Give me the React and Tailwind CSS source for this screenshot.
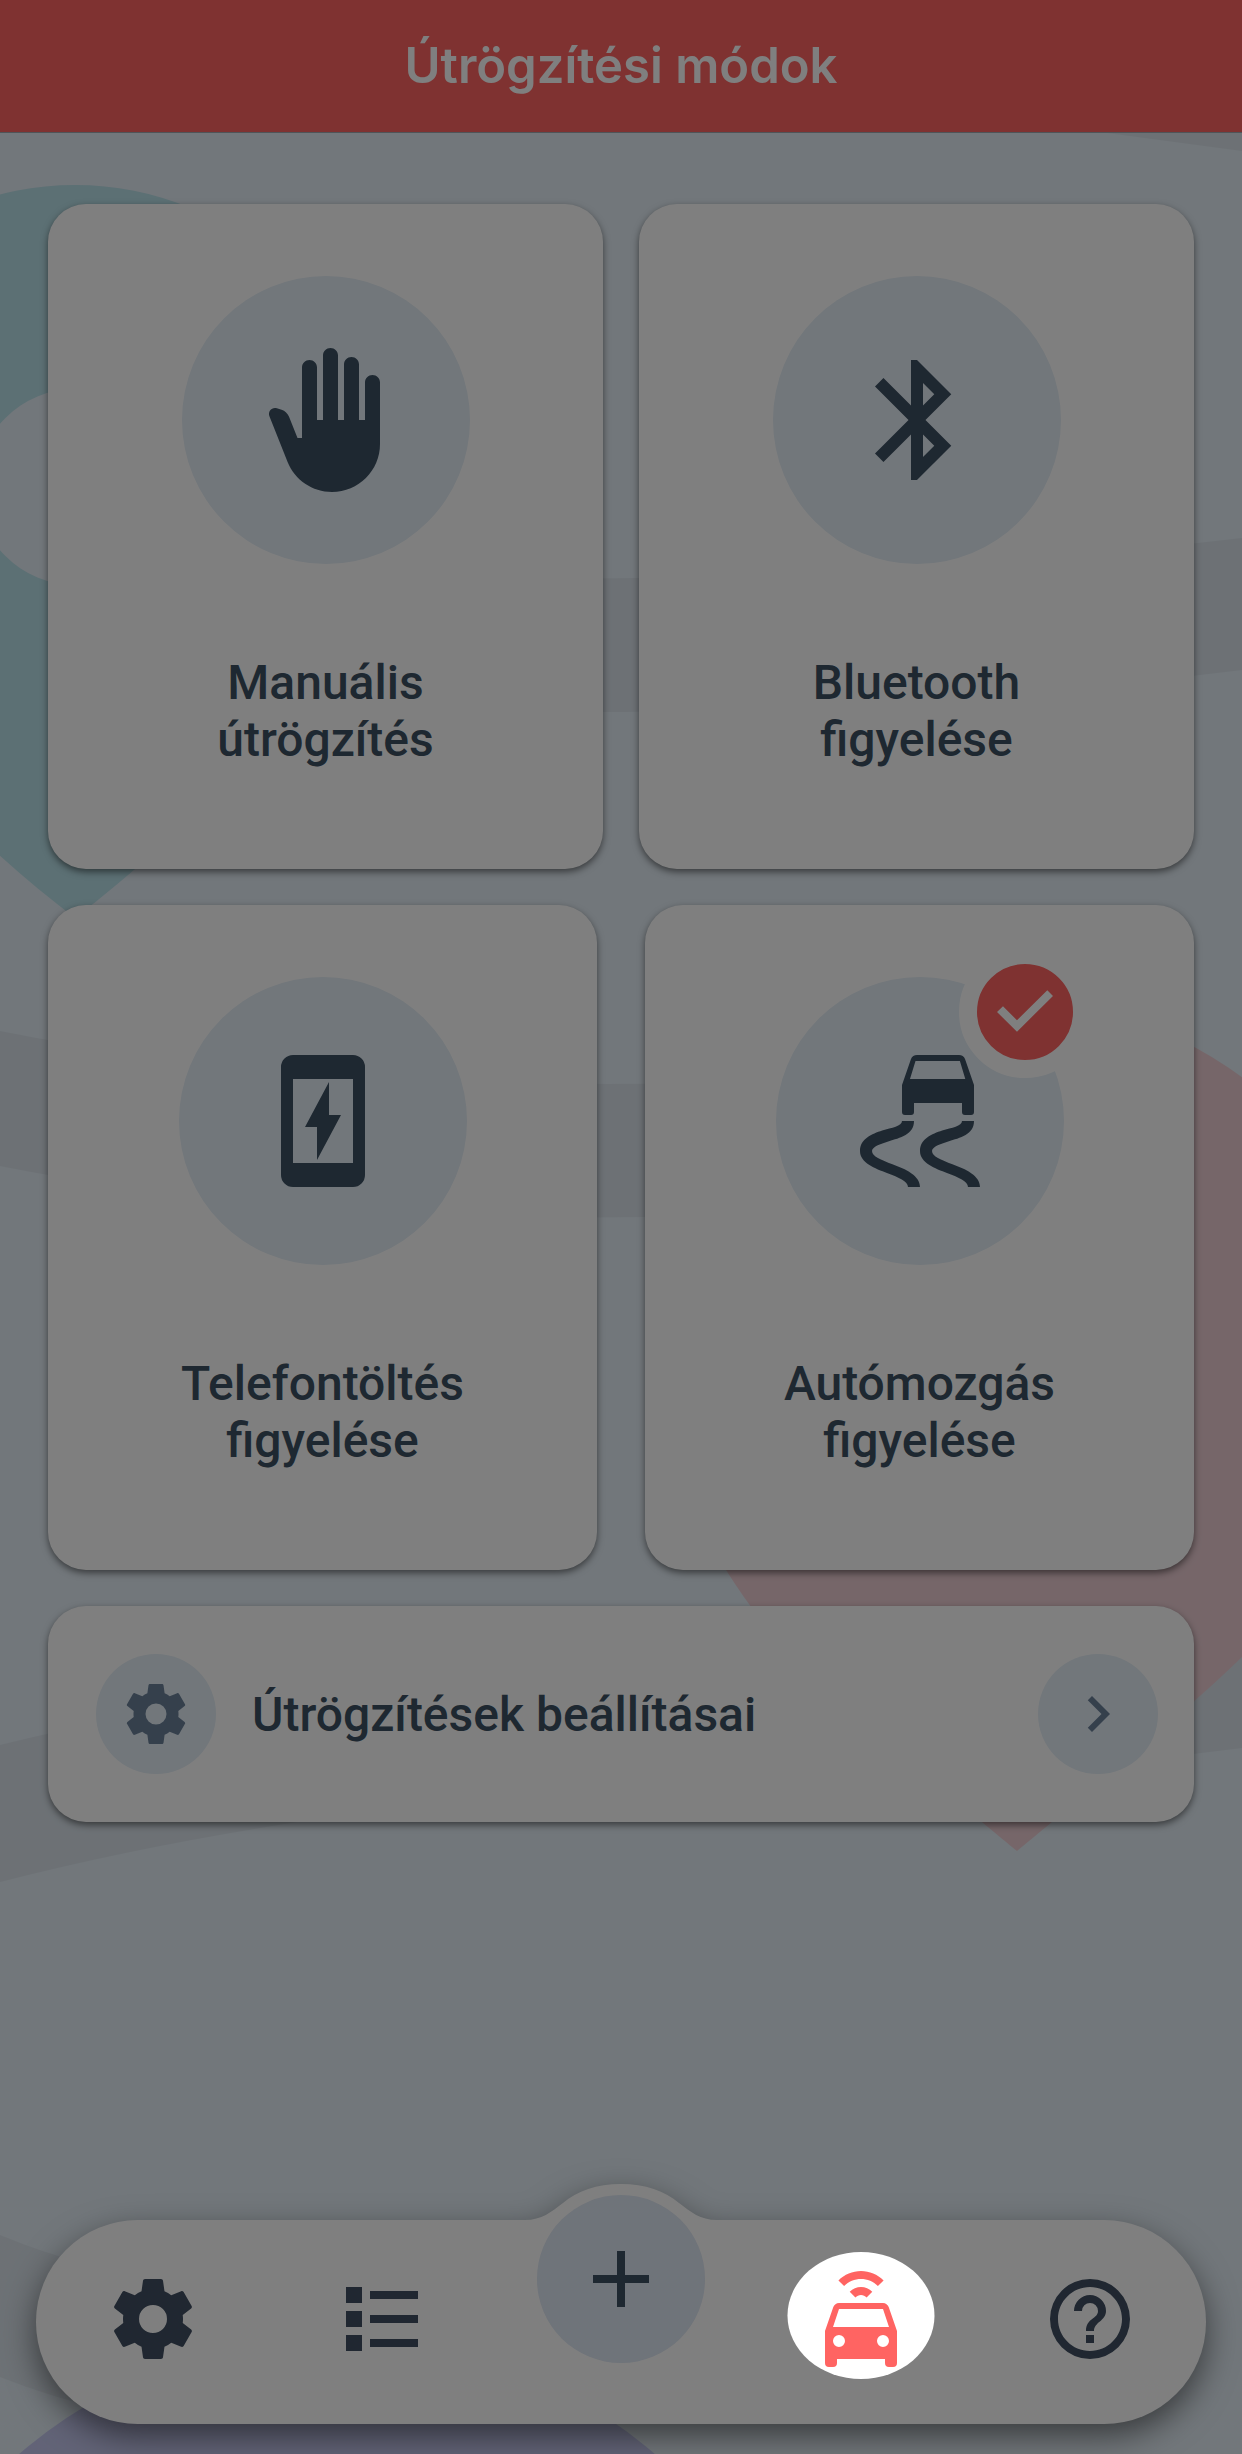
import React, { useState } from 'react';

const icons = {
  hand: 'M13 24C9.74 24 6.81 22 5.6 19L2.57 11.37C2.26 10.58 3 9.79 3.81 10.05L4.6 10.31C5.16 10.5 5.62 10.92 5.84 11.47L7.25 15H8V3.25C8 2.56 8.56 2 9.25 2S10.5 2.56 10.5 3.25V12H11.5V1.25C11.5 .56 12.06 0 12.75 0S14 .56 14 1.25V12H15V2.75C15 2.06 15.56 1.5 16.25 1.5C16.94 1.5 17.5 2.06 17.5 2.75V12H18.5V5.75C18.5 5.06 19.06 4.5 19.75 4.5S21 5.06 21 5.75V16C21 20.42 17.42 24 13 24Z',
  bluetooth:
    'M14.88,16.29L13,18.17V14.41M13,5.83L14.88,7.71L13,9.58M17.71,7.71L12,2H11V9.58L6.41,5L5,6.41L10.59,12L5,17.58L6.41,19L11,14.41V22H12L17.71,16.29L13.41,12L17.71,7.71Z',
  phone:
    'M17 1H7a2 2 0 0 0-2 2v18a2 2 0 0 0 2 2h10a2 2 0 0 0 2-2V3a2 2 0 0 0-2-2zM17 19H7V5h10zM9 13h2v5.5L15 11h-2V5.5z',
  skid: 'M19.5 1.66C19.35 1.26 18.96 1 18.5 1h-7c-.46 0-.85.26-1 .66L9 6v4.5a.5.5 0 0 0 .5.5h1a.5.5 0 0 0 .5-.5V9h8v1.5a.5.5 0 0 0 .5.5h1a.5.5 0 0 0 .5-.5V6zM10.33 5l.92-3h7.4l.9 3zM11 12C11 14.3 8.7 14.8 6.7 15.4C5.4 15.8 4 16.3 4 17C4 17.9 5.5 18.5 7.4 19.2C9.6 20 12 21.1 12 23H10C10 22 8.4 21.4 6.6 20.7C4.5 19.9 2 19 2 17C2 15 4 14.15 5.7 13.6C7.3 13.1 9 12.9 9 12ZM21 12C21 14.3 18.7 14.8 16.7 15.4C15.4 15.8 14 16.3 14 17C14 17.9 15.5 18.5 17.4 19.2C19.6 20 22 21.1 22 23H20C20 22 18.4 21.4 16.6 20.7C14.5 19.9 12 19 12 17C12 15 14 14.15 15.7 13.6C17.3 13.1 19 12.9 19 12Z',
  cog: 'M12,15.5A3.5,3.5 0 0,1 8.5,12A3.5,3.5 0 0,1 12,8.5A3.5,3.5 0 0,1 15.5,12A3.5,3.5 0 0,1 12,15.5M19.43,12.97C19.47,12.65 19.5,12.33 19.5,12C19.5,11.67 19.47,11.34 19.43,11L21.54,9.37C21.73,9.22 21.78,8.95 21.66,8.73L19.66,5.27C19.54,5.05 19.27,4.96 19.05,5.05L16.56,6.05C16.04,5.66 15.5,5.32 14.87,5.07L14.5,2.42C14.46,2.18 14.25,2 14,2H10C9.75,2 9.54,2.18 9.5,2.42L9.13,5.07C8.5,5.32 7.96,5.66 7.44,6.05L4.95,5.05C4.73,4.96 4.46,5.05 4.34,5.27L2.34,8.73C2.21,8.95 2.27,9.22 2.46,9.37L4.57,11C4.53,11.34 4.5,11.67 4.5,12C4.5,12.33 4.53,12.65 4.57,12.97L2.46,14.63C2.27,14.78 2.21,15.05 2.34,15.27L4.34,18.73C4.46,18.95 4.73,19.03 4.95,18.95L7.44,17.94C7.96,18.34 8.5,18.68 9.13,18.93L9.5,21.58C9.54,21.82 9.75,22 10,22H14C14.25,22 14.46,21.82 14.5,21.58L14.87,18.93C15.5,18.67 16.04,18.34 16.56,17.94L19.05,18.95C19.27,19.03 19.54,18.95 19.66,18.73L21.66,15.27C21.78,15.05 21.73,14.78 21.54,14.63L19.43,12.97Z',
  list: 'M3,4H7V8H3V4M9,5V7H21V5H9M3,10H7V14H3V10M9,11V13H21V11H9M3,16H7V20H3V16M9,17V19H21V17H9',
  plus: 'M19,13H13V19H11V13H5V11H11V5H13V11H19V13Z',
  car: 'M5,14H19L17.5,9.5H6.5L5,14M17.5,19A1.5,1.5 0 0,0 19,17.5A1.5,1.5 0 0,0 17.5,16A1.5,1.5 0 0,0 16,17.5A1.5,1.5 0 0,0 17.5,19M6.5,19A1.5,1.5 0 0,0 8,17.5A1.5,1.5 0 0,0 6.5,16A1.5,1.5 0 0,0 5,17.5A1.5,1.5 0 0,0 6.5,19M18.92,9L21,15V23A1,1 0 0,1 20,24H19A1,1 0 0,1 18,23V22H6V23A1,1 0 0,1 5,24H4A1,1 0 0,1 3,23V15L5.08,9C5.28,8.42 5.85,8 6.5,8H17.5C18.15,8 18.72,8.42 18.92,9M12,0C14.12,0 16.15,0.86 17.65,2.35L16.23,3.77C15.11,2.65 13.58,2 12,2C10.42,2 8.89,2.65 7.77,3.77L6.36,2.35C7.85,0.86 9.88,0 12,0M12,4C13.06,4 14.07,4.44 14.82,5.18L13.4,6.6C13.03,6.23 12.53,6 12,6C11.47,6 10.97,6.23 10.6,6.6L9.18,5.18C9.93,4.44 10.94,4 12,4Z',
  help: 'M11,18H13V16H11V18M12,2A10,10 0 0,0 2,12A10,10 0 0,0 12,22A10,10 0 0,0 22,12A10,10 0 0,0 12,2M12,20C7.59,20 4,16.41 4,12C4,7.59 7.59,4 12,4C16.41,4 20,7.59 20,12C20,16.41 16.41,20 12,20M12,6A4,4 0 0,0 8,10H10A2,2 0 0,1 12,8A2,2 0 0,1 14,10C14,12 11,11.75 11,15H13C13,12.75 16,12.5 16,10A4,4 0 0,0 12,6Z',
  check: 'M3.16 12L5.05 10.2L9.47 14.6L19.04 5.15L20.84 6.95L9.47 18.2Z',
  chevron: 'M8.59,16.58L13.17,12L8.59,7.41L10,6L16,12L10,18L8.59,16.58Z',
};

const Icon = ({ name, className }) => (
  <svg viewBox="0 0 24 24" fill="currentColor" fillRule="evenodd" aria-hidden="true" className={className}>
    <path d={icons[name]} />
  </svg>
);

// Pale map with roads and pins behind the content
const MapBackground = () => (
  <svg
    viewBox="0 0 1242 2454"
    preserveAspectRatio="xMidYMin slice"
    aria-hidden="true"
    className="absolute inset-0 h-full w-full"
  >
    <g fill="#dae3eb">
      <path d="M1070 128L1242 151V128Z" />
      <path d="M380 575Q800 590 1242 538V670Q800 725 380 708Z" />
      <path d="M0 1031Q300 1091 700 1083V1216Q300 1226 0 1166Z" />
      <path d="M0 1745Q300 1670 700 1660V1780Q300 1805 0 1882Z" />
      <path d="M900 1660L1242 1610V1748L900 1790Z" />
      <path d="M0 2235Q120 2285 300 2300V2440Q120 2425 0 2377Z" />
    </g>
    <path
      fill="#b8e0e8"
      fillRule="evenodd"
      d="M75 185A302 302 0 0 1 377 487C377 640 210 815 75 918C-60 815-227 640-227 487A302 302 0 0 1 75 185ZM75 389A98 98 0 1 0 75 585A98 98 0 1 0 75 389Z"
    />
    <path
      fill="#eccdd3"
      d="M650 1381A370 376 0 0 1 1393 1381C1393 1440 1320 1570 1242 1657C1194 1705 1057 1818 1017 1851C977 1818 840 1705 792 1657C770 1634 745 1600 726 1570C690 1510 658 1440 650 1381Z"
    />
    <circle cx="337" cy="2823" r="487" fill="#c4c7ee" />
  </svg>
);

const ModeCard = ({ icon, label, active, onClick }) => (
  <button
    type="button"
    aria-pressed={active}
    onClick={onClick}
    className="flex flex-1 flex-col items-center rounded-[38px] bg-white pt-18 pb-[101px] shadow-[0_3px_7px_rgba(0,0,0,0.5)]"
  >
    <span className="relative flex size-72 items-center justify-center rounded-full bg-[#e4eef6]">
      <Icon name={icon} className="size-36" />
      {active && (
        <span className="absolute -top-[31px] -right-[27px] flex size-33 items-center justify-center rounded-full border-18 border-white bg-[#ff6462] text-white">
          <Icon name="check" className="size-19 shrink-0" />
        </span>
      )}
    </span>
    <span className="mt-[90px] w-72 text-5xl leading-[57px] font-medium">{label}</span>
  </button>
);

const NavButton = ({ icon, label, children, className = '' }) => (
  <button type="button" aria-label={label} className={`relative flex items-center justify-center ${className}`}>
    {children}
    <Icon name={icon} className="size-24" />
  </button>
);

const App = () => {
  const [mode, setMode] = useState('motion');

  const card = (id, icon, label) => (
    <ModeCard icon={icon} label={label} active={mode === id} onClick={() => setMode(id)} />
  );

  return (
    <div className="relative flex min-h-screen flex-col overflow-hidden bg-[#e4eef6] font-[Roboto,sans-serif] text-[#3c5062]">
      <MapBackground />

      <header className="relative flex h-33 items-center justify-center bg-[#ff6462] shadow-[0_1px_0_#a0a8b0]">
        <h1 className="font-[Inter,sans-serif] text-[49px] leading-[60px] font-semibold text-white">
          Útrögzítési módok
        </h1>
      </header>

      <main className="relative flex flex-1 flex-col gap-9 px-12 pt-18">
        <div className="flex gap-9">
          {card('manual', 'hand', 'Manuális útrögzítés')}
          {card('bluetooth', 'bluetooth', 'Bluetooth figyelése')}
        </div>
        <div className="flex gap-12">
          {card('charging', 'phone', 'Telefontöltés figyelése')}
          {card('motion', 'skid', 'Autómozgás figyelése')}
        </div>

        <button
          type="button"
          className="flex items-center rounded-[38px] bg-white py-12 pr-9 pl-12 text-left shadow-[0_3px_7px_rgba(0,0,0,0.5)]"
        >
          <span className="flex size-30 items-center justify-center rounded-full bg-[#e4eef6] text-[#6a8099]">
            <Icon name="cog" className="size-18" />
          </span>
          <span className="ml-9 flex-1 text-5xl leading-[57px] font-medium">Útrögzítések beállításai</span>
          <span className="flex size-30 items-center justify-center rounded-full bg-[#e4eef6] text-[#6a8099]">
            <Icon name="chevron" className="size-18" />
          </span>
        </button>
      </main>

      <nav className="relative mx-9 mt-9 mb-[30px] text-[#404f62]">
        {/* Bar shape with the bump around the add button */}
        <div className="absolute inset-0 rounded-full bg-white drop-shadow-[0_12px_16px_rgba(0,0,0,0.5)]">
          <svg viewBox="0 0 192 37" aria-hidden="true" className="absolute bottom-full left-1/2 -mb-px w-48 -translate-x-1/2">
            <path
              fill="#fff"
              d="M0 36C17 36 26 28 38 19C52 7 72 0 96 0C120 0 140 7 154 19C166 28 175 36 192 36V37H0Z"
            />
          </svg>
        </div>

        <div className="relative grid h-51 grid-cols-[234fr_224fr_254fr_226fr_232fr] pb-1.5">
          <NavButton icon="cog" label="Beállítások" />
          <NavButton icon="list" label="Lista" />
          <div className="flex items-start justify-center">
            <NavButton
              icon="plus"
              label="Új út"
              className="-mt-[25px] size-42 rounded-full bg-[#dfe8f4] text-[#3c5062]"
            />
          </div>
          <NavButton icon="car" label="Útrögzítési módok" className="text-[#ff6462]">
            {/* Spotlight: everything outside the ellipse is dimmed */}
            <span className="pointer-events-none absolute top-8 left-1/2 z-10 h-[127px] w-[147px] -translate-x-1/2 rounded-[50%] shadow-[0_0_0_3000px_rgba(0,0,0,0.5)]" />
          </NavButton>
          <NavButton icon="help" label="Súgó" />
        </div>
      </nav>
    </div>
  );
};

export default App;
